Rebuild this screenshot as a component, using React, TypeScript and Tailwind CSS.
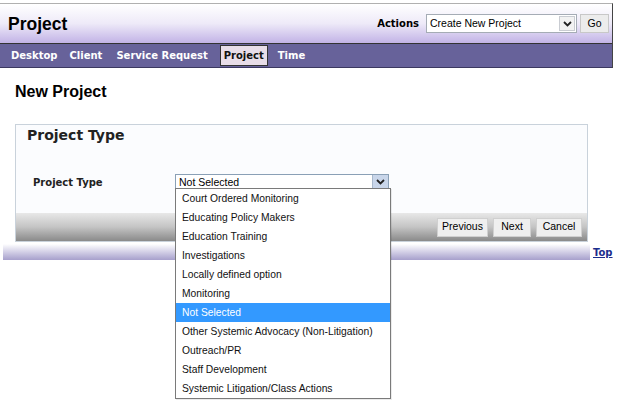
import React from "react";

const V = { fontFamily: '"DejaVu Sans", Verdana, sans-serif' };
const A = { fontFamily: '"Liberation Sans", Arial, sans-serif' };

function Chevron({ className = "" }: { className?: string }) {
  return (
    <svg width="9" height="6" viewBox="0 0 9 6" className={className}>
      <path d="M1 1 L4.5 4.5 L8 1" fill="none" stroke="#222" strokeWidth="1.8" />
    </svg>
  );
}

const options = [
  "Court Ordered Monitoring",
  "Educating Policy Makers",
  "Education Training",
  "Investigations",
  "Locally defined option",
  "Monitoring",
  "Not Selected",
  "Other Systemic Advocacy (Non-Litigation)",
  "Outreach/PR",
  "Staff Development",
  "Systemic Litigation/Class Actions",
];

const buttons: [string, string][] = [
  ["Previous", "w-[51px]"],
  ["Next", "w-[38px]"],
  ["Cancel", "w-[46px]"],
];

export default function App() {
  return (
    <div className="relative w-[618px] h-[406px] overflow-hidden bg-white text-black">
      {/* Header */}
      <div className="pt-[3px] w-[613px]">
        <div className="border-t border-[#b0b0b0] border-r border-r-[#444]">
          <div className="h-[39px] flex items-center justify-between pl-[8px] pr-[3px] bg-gradient-to-b from-[#ffffff] via-[#eeeaf8] to-[#c2b3e6]">
            <div className="text-[17.5px] font-bold leading-none pt-[2px]" style={A}>
              Project
            </div>
            <div className="flex items-center">
              <span className="text-[10px] font-bold mr-[7px]" style={V}>
                Actions
              </span>
              <div className="w-[151px] h-[19px] border border-[#a5acb5] bg-white flex items-center justify-between pl-[3px] pr-[1px]">
                <span className="text-[10.5px]" style={A}>
                  Create New Project
                </span>
                <span className="w-[16px] h-[15px] border border-[#c9ccd2] bg-[#f2f2f2] flex items-center justify-center">
                  <Chevron />
                </span>
              </div>
              <div className="ml-[3px] w-[29px] h-[19px] border border-[#c8c8c8] bg-[#ececec] flex items-center justify-center text-[10.5px]" style={A}>
                Go
              </div>
            </div>
          </div>
          <div className="h-[1px] bg-[#333]" />
          <div className="h-[24px] bg-[#67629a] flex items-center pl-[11px] gap-[12px] text-[10px] font-bold text-white border-b border-[#3b3860]" style={V}>
            <span>Desktop</span>
            <span>Client</span>
            <span className="ml-[2px]">Service Request</span>
            <span className="h-[21px] px-[3px] flex items-center border border-[#333] bg-[#e8dde8] text-[#111]">Project</span>
            <span className="-ml-[2px]">Time</span>
          </div>
        </div>
      </div>

      {/* New Project */}
      <div className="pl-[15px] pt-[15px] text-[16px] font-bold leading-[18px]" style={A}>
        New Project
      </div>

      {/* Panel */}
      <div className="ml-[15px] mt-[23px] w-[573px] border border-[#c9d2db] bg-[#fbfcfe]">
        <div className="pl-[11px] pt-[1px] text-[14px] font-bold leading-[18px] text-[#222]" style={V}>
          Project Type
        </div>
        <div className="flex items-center mt-[30px] h-[16px]">
          <div className="pl-[17px] w-[159px] text-[10px] font-bold text-[#222]" style={V}>
            Project Type
          </div>
          <div className="w-[214px] h-[17px] border border-[#8aa0b6] bg-white flex items-center justify-between pl-[3px]">
            <span className="text-[10.5px] leading-none" style={A}>
              Not Selected
            </span>
            <span className="w-[16px] h-[15px] bg-[#c9d6ea] border-l border-[#a8b8cc] flex items-center justify-center">
              <Chevron />
            </span>
          </div>
        </div>
        <div className="mt-[23px] h-[28px] bg-gradient-to-b from-[#e8e8e8] via-[#c4c4c4] to-[#8a8a8a] flex items-center justify-end gap-[5px] pr-[5px]">
          {buttons.map(([b, w]) => (
            <div key={b} className={"h-[19px] border border-[#d0d0d0] bg-[#efefef] flex items-center justify-center text-[10.5px] " + w} style={A}>
              {b}
            </div>
          ))}
        </div>
      </div>

      {/* Bottom bar */}
      <div className="mt-[2px] flex items-end">
        <div className="ml-[3px] w-[587px] h-[16px] bg-gradient-to-b from-[#ffffff] to-[#a7a0cc]" />
        <a className="ml-[3px] text-[10px] font-bold text-[#1b2c8c] underline leading-none mb-[2px]" style={V}>
          Top
        </a>
      </div>

      {/* Dropdown list */}
      <div className="absolute left-[175px] top-[188px] w-[216px] border border-[#7a7a7a] bg-white shadow-[1px_1px_0_rgba(0,0,0,0.08)]">
        {options.map((o) => (
          <div
            key={o}
            className={
              "h-[19px] pl-[6px] flex items-center text-[10.3px] " +
              (o === "Not Selected" ? "bg-[#3399ff] text-white" : "text-[#111]")
            }
            style={A}
          >
            {o}
          </div>
        ))}
      </div>
    </div>
  );
}
